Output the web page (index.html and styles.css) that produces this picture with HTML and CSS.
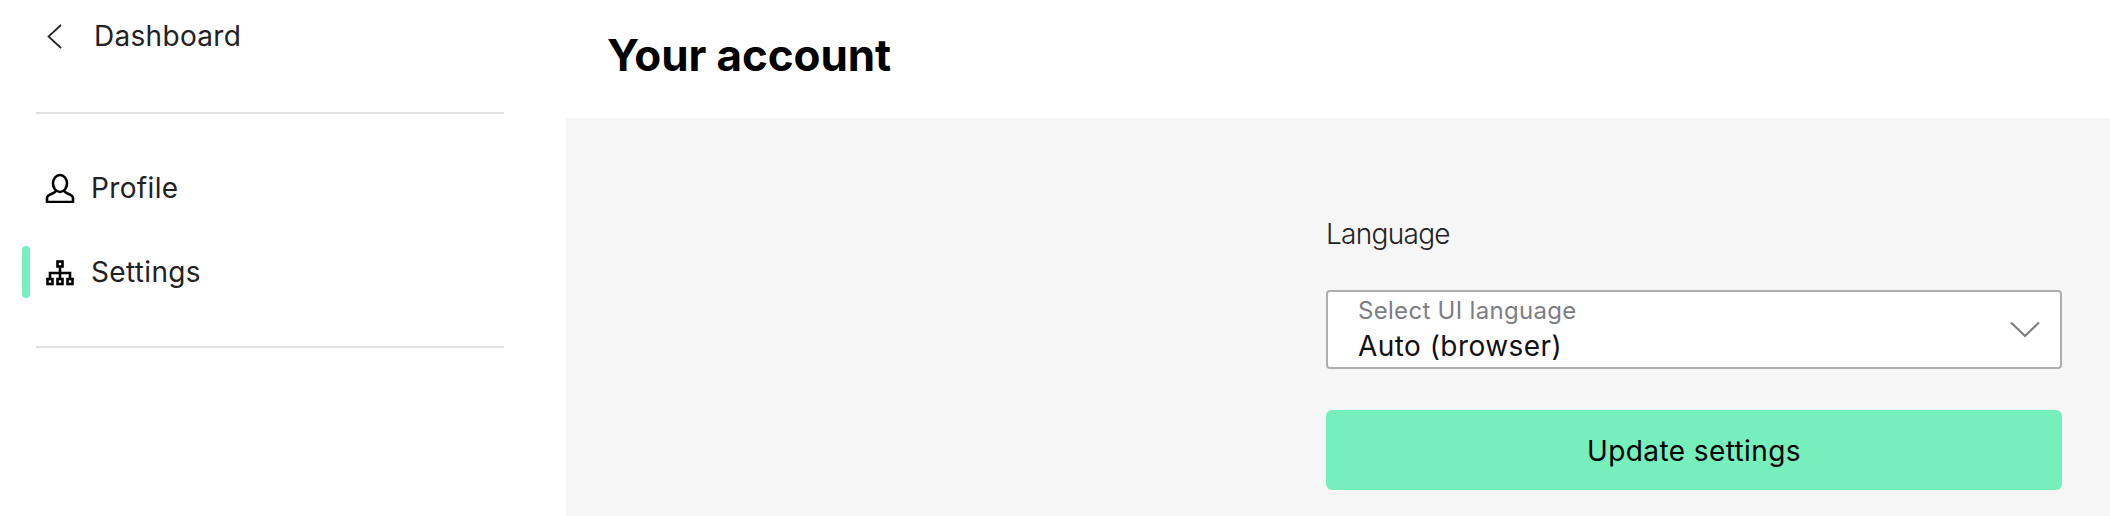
FILE: index.html
```html
<!DOCTYPE html>
<html lang="en">
<head>
    <meta charset="UTF-8">
    <meta name="viewport" content="width=device-width, initial-scale=1.0">
    <title>Your account</title>
    <link rel="stylesheet" href="styles.css">
</head>
<body>
    <div class="layout">
        <!-- Sidebar -->
        <nav class="sidebar">
            <a class="back-link" href="#">
                <svg class="back-icon" width="15" height="25" viewBox="0 0 15 25" fill="none" stroke="#222" stroke-width="1.7">
                    <path d="M14 1 L1.5 12.5 L14 24"/>
                </svg>
                <span>Dashboard</span>
            </a>
            <div class="nav-list">
                <a class="nav-item" href="#">
                    <svg width="30" height="30" viewBox="0 0 30 30" fill="none" stroke="#000" stroke-width="2.6">
                        <ellipse cx="15" cy="10.5" rx="7" ry="8.5"/>
                        <path d="M10.5 18 C10.5 21 2 20.5 2 25 V29 H28 V25 C28 20.5 19.5 21 19.5 18"/>
                    </svg>
                    <span>Profile</span>
                </a>
                <a class="nav-item active" href="#">
                    <svg width="30" height="30" viewBox="0 0 30 30" fill="none" stroke="#000" stroke-width="2.6">
                        <rect x="12.5" y="4.5" width="5" height="5"/>
                        <rect x="2.5" y="22" width="5" height="5"/>
                        <rect x="12.5" y="22" width="5" height="5"/>
                        <rect x="22.5" y="22" width="5" height="5"/>
                        <path d="M15 9.5 V22 M5 22 V16 H25 V22"/>
                    </svg>
                    <span>Settings</span>
                </a>
            </div>
        </nav>

        <div class="page">
            <header class="page-header">
                <h1>Your account</h1>
            </header>
            <main class="page-body">
                <form class="settings-form">
                    <h2>Language</h2>
                    <div class="select-box">
                        <div class="select-text">
                            <label>Select UI language</label>
                            <div class="select-value">Auto (browser)</div>
                        </div>
                        <svg width="30" height="17" viewBox="0 0 30 17" fill="none" stroke="#7d7e84" stroke-width="2.2">
                            <path d="M1 1.5 L15 15 L29 1.5"/>
                        </svg>
                    </div>
                    <button type="button" class="submit-button">Update settings</button>
                </form>
            </main>
        </div>
    </div>
</body>
</html>
```

FILE: styles.css
```css
/* Account settings page */
body {
    font-family: Inter, "Open Sans", Arial, sans-serif;
    margin: 0;
    padding: 0;
    background-color: #ffffff;
    color: #222222;
    overflow: hidden;
}

a {
    color: inherit;
    text-decoration: none;
}

.layout {
    display: flex;
    height: 516px;
}

.sidebar {
    width: 566px;
    flex-shrink: 0;
    box-sizing: border-box;
    padding: 0 62px 0 36px;
}

.back-link {
    display: flex;
    align-items: center;
    height: 112px;
    padding: 0 0 40px 11px;
    box-sizing: border-box;
    font-size: 28px;
    letter-spacing: 0.3px;
}

.back-icon {
    margin-right: 32px;
}

.nav-list {
    display: flex;
    flex-direction: column;
    gap: 24px;
    padding-top: 44px;
    border-top: 2px solid #e0e0e0;
    border-bottom: 2px solid #e0e0e0;
    height: 236px;
    box-sizing: border-box;
}

.nav-item {
    position: relative;
    display: flex;
    align-items: center;
    gap: 16px;
    height: 60px;
    padding-left: 9px;
    font-size: 28px;
    letter-spacing: 0.35px;
}

.nav-item.active::before {
    content: "";
    position: absolute;
    left: -14px;
    top: 4px;
    width: 8px;
    height: 52px;
    border-radius: 4px;
    background-color: #76efbd;
}

.page {
    flex: 1;
    display: flex;
    flex-direction: column;
}

.page-header {
    height: 118px;
    box-sizing: border-box;
    padding: 28px 41px 0;
}

.page-header h1 {
    margin: 0;
    font-size: 44px;
    line-height: 54px;
    font-weight: 700;
    letter-spacing: -0.1px;
    color: #000000;
}

.page-body {
    flex: 1;
    background-color: #f6f6f6;
    display: flex;
    justify-content: flex-end;
    padding-right: 48px;
}

.settings-form {
    width: 736px;
    display: flex;
    flex-direction: column;
}

.settings-form h2 {
    margin: 98px 0 38px;
    font-size: 28px;
    line-height: 36px;
    font-weight: 300;
    letter-spacing: -0.7px;
}

.select-box {
    height: 79px;
    box-sizing: border-box;
    display: flex;
    align-items: center;
    justify-content: space-between;
    padding: 0 20px 0 30px;
    background: #ffffff;
    border: 2px solid #aeaeb2;
    border-radius: 4px;
}

.select-text {
    padding-top: 2px;
}

.select-text label {
    display: block;
    font-size: 24px;
    line-height: 30px;
    letter-spacing: 0.3px;
    color: #7d7e84;
}

.select-value {
    font-size: 28px;
    line-height: 40px;
    letter-spacing: 0.45px;
    color: #111111;
}

.submit-button {
    margin-top: 41px;
    height: 80px;
    padding-top: 3px;
    font-family: inherit;
    font-size: 28px;
    letter-spacing: 0.4px;
    color: #000000;
    background-color: #76efbd;
    border: none;
    border-radius: 6px;
    cursor: pointer;
}
```
